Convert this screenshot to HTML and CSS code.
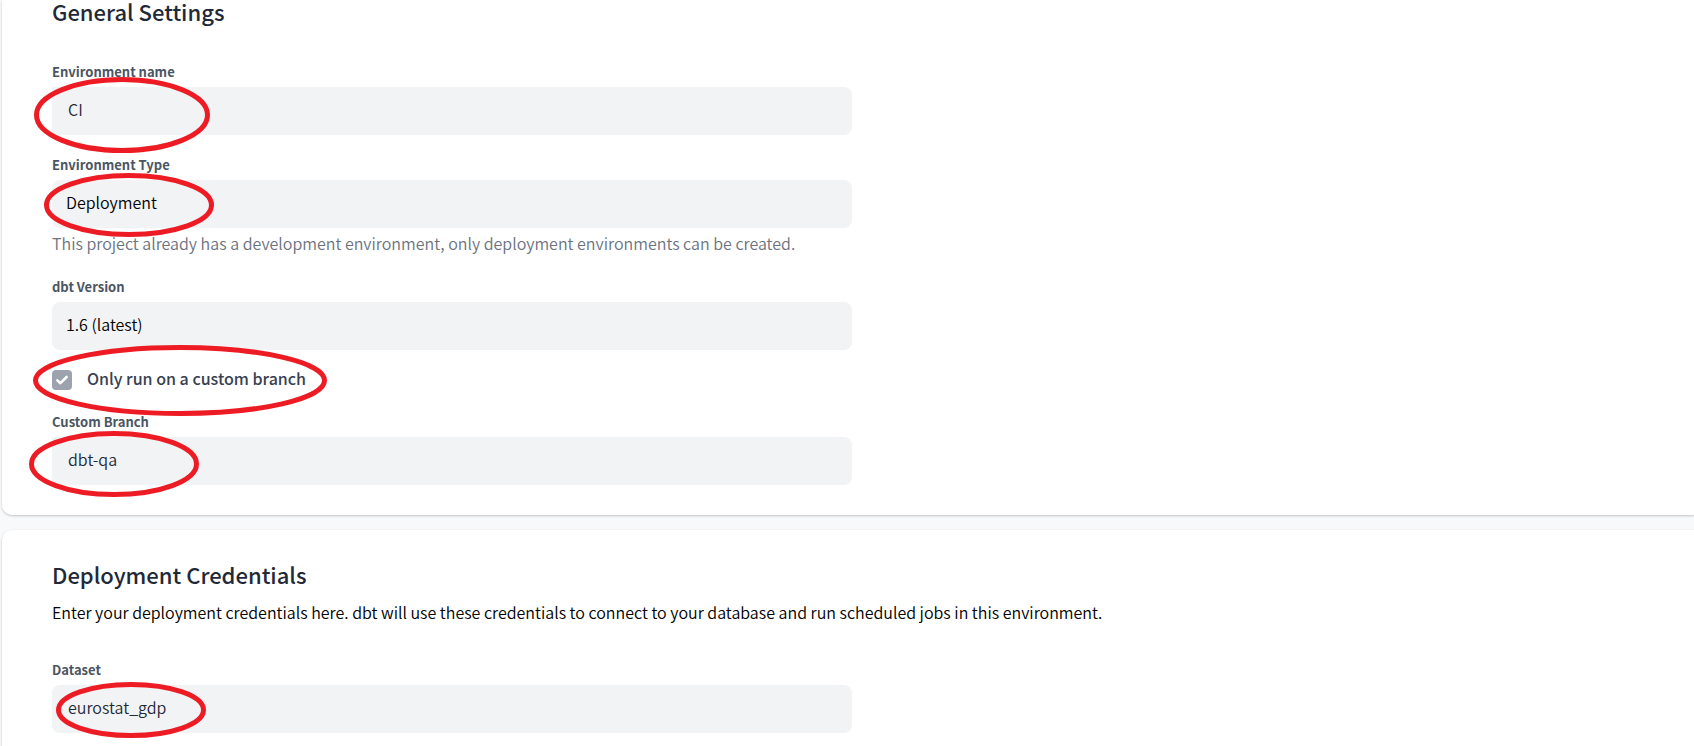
FILE: index.html
```html
<!DOCTYPE html>
<html lang="en">
<head>
<meta charset="utf-8">
<title>Environment settings</title>
<link rel="stylesheet" href="styles.css">
</head>
<body>
<main class="page">
  <section class="card card-general">
    <h2 class="title">General Settings</h2>
    <form class="fields">
      <div class="field">
        <label class="label" for="env-name">Environment name</label>
        <input class="control control-text control-flush" id="env-name" type="text" value="CI" readonly>
      </div>
      <div class="field">
        <label class="label" for="env-type">Environment Type</label>
        <select class="control control-select" id="env-type"><option>Deployment</option></select>
        <p class="hint">This project already has a development environment, only deployment environments can be created.</p>
      </div>
      <div class="field">
        <label class="label" for="dbt-version">dbt Version</label>
        <select class="control control-select" id="dbt-version"><option>1.6 (latest)</option></select>
      </div>
      <div class="check-row">
        <span class="check">
          <input class="check-input" id="custom-only" type="checkbox" checked>
          <svg class="check-mark" viewBox="0 0 20 20" aria-hidden="true"><path d="M5.4 10.4 8.4 13.2 14.6 7"/></svg>
        </span>
        <label class="check-label" for="custom-only">Only run on a custom branch</label>
      </div>
      <div class="field">
        <label class="label" for="branch">Custom Branch</label>
        <input class="control control-text control-flush" id="branch" type="text" value="dbt-qa" readonly>
      </div>
    </form>
  </section>
  <section class="card card-credentials">
    <h2 class="title">Deployment Credentials</h2>
    <p class="intro">Enter your deployment credentials here. dbt will use these credentials to connect to your database and run scheduled jobs in this environment.</p>
    <form class="fields">
      <div class="field">
        <label class="label" for="dataset">Dataset</label>
        <input class="control control-text" id="dataset" type="text" value="eurostat_gdp" readonly>
      </div>
    </form>
  </section>
  <svg class="marks" width="400" height="746" aria-hidden="true">
    <ellipse cx="122" cy="115" rx="85.5" ry="35.5"/>
    <ellipse cx="129" cy="205" rx="82.5" ry="29.5"/>
    <ellipse cx="180" cy="380.5" rx="144.5" ry="33"/>
    <ellipse cx="114" cy="464" rx="82.5" ry="30.5"/>
    <ellipse cx="131" cy="710" rx="72.5" ry="25.5"/>
  </svg>
</main>
</body>
</html>
```
FILE: styles.css
```css
* { box-sizing: border-box; }

body {
  margin: 0;
  background: #f8f9fb;
  color: #111827;
  font-family: "Noto Sans CJK SC", "Noto Sans", sans-serif;
  font-size: 16px;
  font-weight: 350;
  line-height: 24px;
  overflow: hidden;
}

h2, p { margin: 0; }

.page {
  position: relative;
  display: flex;
  flex-direction: column;
  gap: 15px;
  padding-left: 2px;
}

.card {
  margin-right: -8px;
  background: #fff;
  border-radius: 10px;
  box-shadow: 0 1px 3px rgba(0, 0, 0, .12), 0 1px 2px rgba(0, 0, 0, .1);
  padding: 28px 50px 30px;
}

.card-general {
  padding-top: 0;
  border-top-left-radius: 0;
  border-top-right-radius: 0;
}

.title {
  color: #1f2937;
  font-size: 22px;
  font-weight: 500;
  line-height: 32px;
}

.card-general .title { line-height: 22px; }
.card-general .fields { margin-top: 40px; }

.fields {
  display: flex;
  flex-direction: column;
  gap: 20px;
  max-width: 800px;
  margin-top: 36px;
}

.field {
  display: flex;
  flex-direction: column;
  gap: 5px;
}

.label {
  color: #4b5563;
  font-size: 13px;
  font-weight: 700;
  line-height: 20px;
}

.control {
  width: 100%;
  height: 48px;
  border: 0;
  border-radius: 8px;
  background: #f2f3f5;
  font: inherit;
  outline: 0;
  appearance: none;
}

.control-text { padding: 0 16px 4px; color: #1f2937; }
.control-select { padding: 0 14px 4px; color: #000; opacity: 1; }
.control-flush { border-radius: 0 8px 8px 0; }

.hint { padding-bottom: 4px; color: #6b7280; line-height: 20px; }

.check-row {
  display: flex;
  align-items: flex-start;
  gap: 15px;
  height: 22px;
}

.check {
  position: relative;
  width: 20px;
  height: 20px;
}

.check-input {
  display: block;
  width: 20px;
  height: 20px;
  margin: 0;
  border-radius: 4px;
  background: #9ca3af;
  appearance: none;
}

.check-mark {
  position: absolute;
  inset: 0;
  fill: none;
  stroke: #fff;
  stroke-width: 2.6;
  stroke-linecap: round;
  stroke-linejoin: round;
  pointer-events: none;
}

.check-label { color: #374151; font-weight: 500; line-height: 16px; }

.intro { color: #000; margin-top: 10px; }

.marks {
  position: absolute;
  top: 0;
  left: 0;
  fill: none;
  stroke: #ed1c24;
  stroke-width: 5;
  pointer-events: none;
}
```
